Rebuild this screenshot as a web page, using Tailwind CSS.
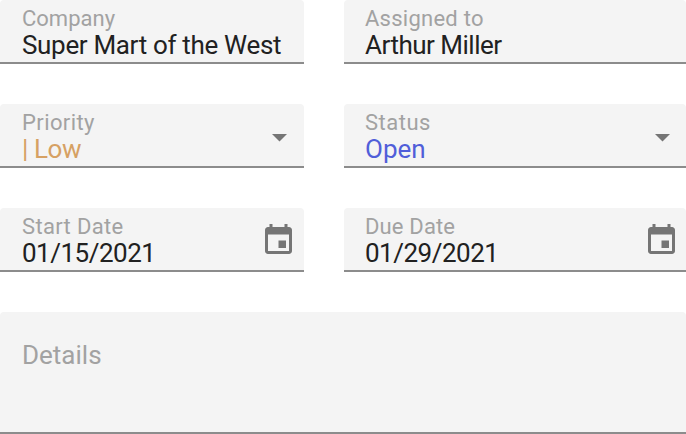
<!DOCTYPE html>
<html lang="en"><head><meta charset="utf-8"><title>Task</title><script src="https://cdn.jsdelivr.net/npm/@tailwindcss/browser@4"></script></head>
<body class="bg-white overflow-hidden font-['Roboto',sans-serif]">
<main class="w-[686px] h-[434px] grid grid-cols-[304px_342px] grid-rows-[64px_64px_64px_122px] gap-10">
<section class="bg-[#f4f4f4] rounded-t border-b-2 border-[#8c8c8c] pl-[22px] pr-[21px] pt-[5px]">
<div class="text-[22px] leading-[27px] text-[#a2a2a2]">Company</div>
<div class="text-[26px] leading-[27px] tracking-[-0.33px] text-[#212121] overflow-hidden whitespace-nowrap">Super Mart of the West</div>
</section>
<section class="bg-[#f4f4f4] rounded-t border-b-2 border-[#8c8c8c] pl-[21px] pt-[5px]">
<div class="text-[22px] leading-[27px] tracking-[0.25px] text-[#a2a2a2]">Assigned to</div>
<div class="text-[26px] leading-[27px] tracking-[-0.5px] text-[#212121]">Arthur Miller</div>
</section>
<section class="bg-[#f4f4f4] rounded-t border-b-2 border-[#8c8c8c] pl-[22px] pr-[17.500px] flex justify-between">
<div class="pt-[5px]"><div class="text-[22px] leading-[27px] tracking-[0.4px] text-[#a2a2a2]">Priority</div>
<div class="text-[26px] leading-[27px] tracking-[-0.4px] text-[#d6a163]">| Low</div></div>
<svg class="mt-[30px]" width="15" height="8"><path d="M0 0h15l-7.500 7.500z" fill="#757575"/></svg>
</section>
<section class="bg-[#f4f4f4] rounded-t border-b-2 border-[#8c8c8c] pl-[21px] pr-[16.500px] flex justify-between">
<div class="pt-[5px]"><div class="text-[22px] leading-[27px] tracking-[0.5px] text-[#a2a2a2]">Status</div>
<div class="text-[26px] leading-[27px] text-[#505ed9]">Open</div></div>
<svg class="mt-[30px]" width="15" height="8"><path d="M0 0h15l-7.500 7.500z" fill="#757575"/></svg>
</section>
<section class="bg-[#f4f4f4] rounded-t border-b-2 border-[#8c8c8c] pl-[22px] pr-[7px] flex justify-between">
<div class="pt-[5px]"><div class="text-[22px] leading-[27px] tracking-[0.35px] text-[#a2a2a2]">Start Date</div>
<div class="text-[26px] leading-[27px] tracking-[-0.5px] text-[#212121]">01/15/2021</div></div>
<svg class="mt-[14px]" width="37" height="37" viewBox="0 0 37 37"><path transform="translate(.5 .5) scale(1.5)" d="M17 12h-5v5h5v-5zM16 1v2H8V1H6v2H5c-1.110 0-1.990.9-1.990 2L3 19c0 1.100.89 2 2 2h14c1.100 0 2-.9 2-2V5c0-1.100-.9-2-2-2h-1V1h-2zm3 18H5V8h14v11z" fill="#757575"/></svg>
</section>
<section class="bg-[#f4f4f4] rounded-t border-b-2 border-[#8c8c8c] pl-[21px] pr-[6px] flex justify-between">
<div class="pt-[5px]"><div class="text-[22px] leading-[27px] tracking-[0.15px] text-[#a2a2a2]">Due Date</div>
<div class="text-[26px] leading-[27px] tracking-[-0.5px] text-[#212121]">01/29/2021</div></div>
<svg class="mt-[14px]" width="37" height="37" viewBox="0 0 37 37"><path transform="translate(.5 .5) scale(1.5)" d="M17 12h-5v5h5v-5zM16 1v2H8V1H6v2H5c-1.110 0-1.990.9-1.990 2L3 19c0 1.100.89 2 2 2h14c1.100 0 2-.9 2-2V5c0-1.100-.9-2-2-2h-1V1h-2zm3 18H5V8h14v11z" fill="#757575"/></svg>
</section>
<section class="col-span-2 bg-[#f4f4f4] rounded-t border-b-2 border-[#8c8c8c] pl-[22px] pt-[28px] text-[26px] leading-[30px] text-[#a2a2a2]">Details</section>
</main></body></html>
